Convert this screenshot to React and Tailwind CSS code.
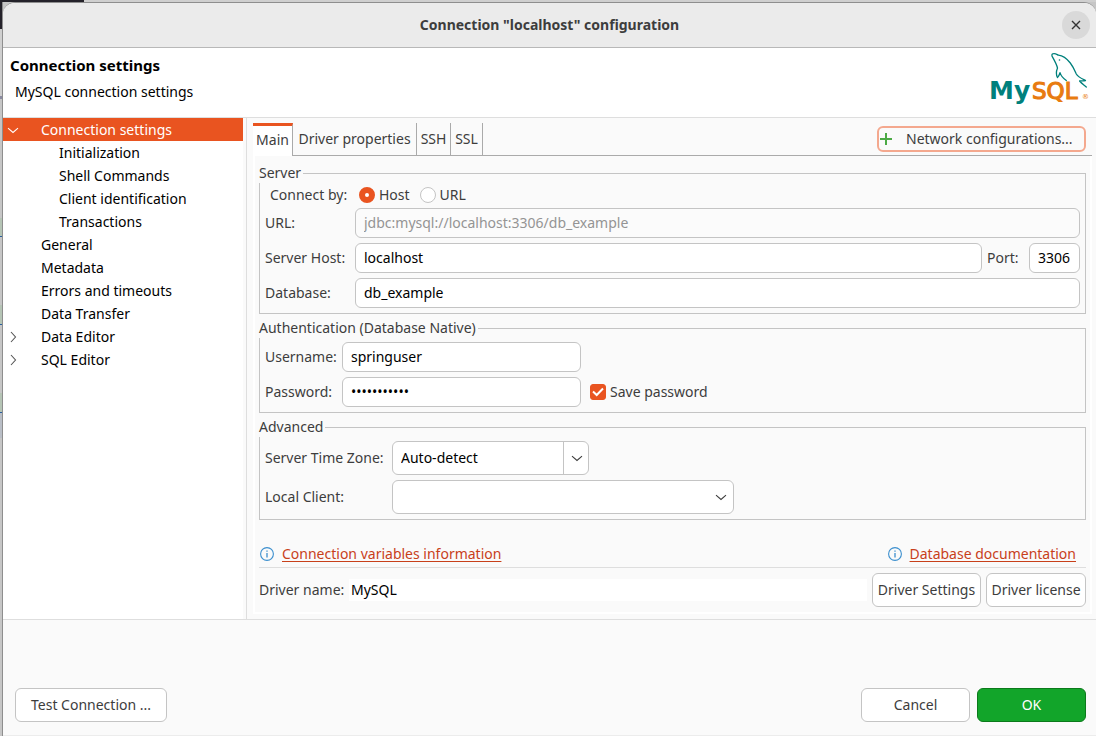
import React from "react";

const TREE = [
  { label: "Connection settings", arrow: "down", selected: true },
  { label: "Initialization", child: true },
  { label: "Shell Commands", child: true },
  { label: "Client identification", child: true },
  { label: "Transactions", child: true },
  { label: "General" },
  { label: "Metadata" },
  { label: "Errors and timeouts" },
  { label: "Data Transfer" },
  { label: "Data Editor", arrow: "right" },
  { label: "SQL Editor", arrow: "right" },
];

const BUTTON =
  "h-[34px] rounded-md border border-[#c4c4c4] bg-white text-[#3d3d3d] whitespace-nowrap";
const FIELD =
  "h-[30px] min-w-0 rounded-md border border-[#c4c4c4] bg-white px-2 pb-0.5 text-black outline-none";

function Chevron({ dir = "down", className = "" }) {
  return (
    <svg viewBox="0 0 12 12" className={"size-3 " + className} fill="none" stroke="currentColor" strokeWidth="1.1" aria-hidden="true">
      <path d={dir === "down" ? "M1 4.2 L6 8.5 L11 4.2" : "M4 1 L8.5 6 L4 11"} />
    </svg>
  );
}

function MySqlLogo() {
  return (
    <svg viewBox="0 0 99 52" className="h-[52px] w-[99px]" role="img" aria-label="MySQL">
      <g fontFamily="'DejaVu Sans', sans-serif">
        <text x="-1" y="47" fontSize="25" fontWeight="700" fill="#00807c">My</text>
        <text x="42" y="47" fontSize="23" fill="#e87b10" stroke="#e87b10" strokeWidth="1.2">SQL</text>
        <text x="92" y="47" fontSize="7" fill="#e87b10">®</text>
      </g>
      <g fill="none" stroke="#00807c" strokeWidth="1.3" strokeLinejoin="round" strokeLinecap="round">
        <path d="M67.5 25.5 C65.5 22 66.5 18.5 67.5 16 C66.5 12 64.5 8.5 62.8 5.5 C61.4 3.6 61.5 1.8 63.5 1.7 C65.5 1.2 67 2.6 68.5 3.2 C74 3.8 77.5 7.5 80.3 11 C83.2 14.7 84.8 18.5 86.3 22 C88 25 91.5 26.5 95.5 28.5 C93 29.2 91.5 28.6 89.6 29 C91.5 31.5 94 33 96.3 35" />
        <path d="M67.5 25.5 C68.8 24.8 69.3 23 70 20.6 C71 24 73.5 26.5 76.3 28.5" />
      </g>
      <circle cx="69.5" cy="8" r="0.8" fill="#00807c" />
    </svg>
  );
}

function InfoLink({ children }) {
  return (
    <div className="flex items-center gap-2">
      <svg viewBox="0 0 14 14" className="size-[14px]" fill="none" stroke="#3c8fce" aria-hidden="true">
        <circle cx="7" cy="7" r="6.4" strokeWidth="1.1" />
        <path d="M7 6 V10.5 M7 3.5 V4.8" strokeWidth="1.3" />
      </svg>
      <a href="#" className="text-[#c8401a] underline underline-offset-2">{children}</a>
    </div>
  );
}

function Group({ title, children }) {
  return (
    <fieldset className="min-w-0 border border-[#c4c4c4] px-[5px] pb-[5px]">
      <legend className="-ml-[6px] h-5 bg-[#fafafa] pr-0.5 leading-5">{title}</legend>
      {children}
    </fieldset>
  );
}

function Backdrop() {
  return (
    <div className="flex w-[3px] shrink-0 flex-col border-r border-[#8e8e8e] bg-[#c6c6c6]" aria-hidden="true">
      <div className="h-[27px] bg-[#24222a]" />
      <div className="h-[67px] bg-[#cfcfcf]" />
      <div className="h-[3px] bg-[#8a8aa0]" />
      <div className="h-[119px]" />
      <div className="h-[19px] border-b border-[#2a5f9e] bg-[#b5c4b5]" />
      <div className="h-[68px]" />
      <div className="h-[20px] border-b border-[#2a5f9e] bg-[#b5c4b5]" />
      <div className="h-[68px]" />
      <div className="h-[20px] border-b border-[#2a5f9e] bg-[#b5c4b5]" />
      <div className="h-[25px] bg-[#b9bec6]" />
    </div>
  );
}

export default function App() {
  return (
    <div className="flex min-h-screen flex-col bg-[#c6c6c6] font-['Noto_Sans',sans-serif] text-[14px] leading-5 text-[#3d3d3d]">
      <div className="flex h-0.5 shrink-0" aria-hidden="true">
        <div className="w-[84px] bg-[#24222a]" />
        <div className="flex-1 bg-[#cfcfcf]" />
      </div>
      <div className="flex flex-1 items-stretch">
        <Backdrop />
        <main className="flex min-w-0 flex-1 flex-col rounded-t-xl border-t border-[#8e8e8e] bg-[#fafafa]">
          <header className="flex h-[45px] shrink-0 items-center rounded-t-xl border-b border-[#b8b8b8] bg-[#ebebeb] pr-[6px] pl-[34px]">
            <h1 className="flex-1 text-center font-bold">Connection "localhost" configuration</h1>
            <button type="button" aria-label="Close" className="grid size-7 place-items-center rounded-full bg-[#d9d9d9] text-[#333]">
              <svg viewBox="0 0 10 10" className="size-[10px]" stroke="currentColor" strokeWidth="1.4" aria-hidden="true">
                <path d="M1 1 L9 9 M9 1 L1 9" />
              </svg>
            </button>
          </header>

          <section className="flex h-[70px] shrink-0 justify-between border-b border-[#dedede] bg-white pr-[7px] pl-[7px] text-black">
            <div className="pt-[7px]">
              <h2 className="text-[15px] leading-5 font-bold">Connection settings</h2>
              <p className="mt-[7px] pl-[5px]">MySQL connection settings</p>
            </div>
            <div className="pt-1">
              <MySqlLogo />
            </div>
          </section>

          <div className="flex border-b border-[#dedede]">
            <nav aria-label="Settings pages" className="flex w-[244px] shrink-0 border-r border-[#dedede] pr-[3px] text-black">
              <ul className="flex-1 bg-white">
                {TREE.map((n) => (
                  <li key={n.label}>
                    <button
                      type="button"
                      className={
                        "flex h-[23px] w-full items-center text-left " +
                        (n.child ? "pl-14 " : "") +
                        (n.selected ? "bg-[#e95420] text-white" : "")
                      }
                    >
                      {!n.child && (
                        <span className="w-[38px] shrink-0 pl-1">
                          {n.arrow && <Chevron dir={n.arrow} className={n.selected ? "" : "text-[#555]"} />}
                        </span>
                      )}
                      {n.label}
                    </button>
                  </li>
                ))}
              </ul>
            </nav>

            <section className="min-w-0 flex-1 pt-[5px] pr-1 pb-[5px] pl-[6px]">
              <div className="flex h-[33px]">
                <div role="tablist" className="flex">
                  <button type="button" role="tab" aria-selected="true" className="w-10 border-t-[3px] border-r border-t-[#e95420] border-r-[#aaa] bg-white pb-0.5">
                    Main
                  </button>
                  <button type="button" role="tab" aria-selected="false" className="w-[124px] border-r border-b border-[#aaa]">Driver properties</button>
                  <button type="button" role="tab" aria-selected="false" className="w-[34px] border-r border-b border-[#aaa]">SSH</button>
                  <button type="button" role="tab" aria-selected="false" className="w-8 border-r border-b border-[#aaa]">SSL</button>
                </div>
                <div className="flex flex-1 items-start justify-end border-b border-[#aaa] pt-[3px] pr-[6px]">
                  <button type="button" className="flex h-[26px] w-[209px] items-center gap-[14px] rounded-md border-2 border-[#f4a88e] pl-px whitespace-nowrap">
                    <svg viewBox="0 0 12 12" className="size-3 shrink-0" stroke="#4caa45" strokeWidth="2" aria-hidden="true">
                      <path d="M6 0 V12 M0 6 H12" />
                    </svg>
                    Network configurations...
                  </button>
                </div>
              </div>

              <div role="tabpanel" className="border-2 border-t-0 border-white px-1 pt-[7px] pb-[5px]">
                <div className="flex flex-col gap-1">
                  <Group title="Server">
                    <div className="flex h-[25px] items-center pb-0.5 pl-[5px]">
                      <span className="w-[89px]">Connect by:</span>
                      <label className="flex items-center gap-1">
                        <input type="radio" name="mode" defaultChecked className="size-4 appearance-none rounded-full border border-[#c4c4c4] bg-white checked:border-[6px] checked:border-[#e95420]" />
                        Host
                      </label>
                      <label className="ml-[10px] flex items-center gap-1">
                        <input type="radio" name="mode" className="size-4 appearance-none rounded-full border border-[#c4c4c4] bg-white checked:border-[6px] checked:border-[#e95420]" />
                        URL
                      </label>
                    </div>
                    <div className="grid grid-cols-[85px_1fr] items-center gap-[5px]">
                      <label htmlFor="url">URL:</label>
                      <input id="url" disabled defaultValue="jdbc:mysql://localhost:3306/db_example" className="h-[30px] min-w-0 rounded-md border border-[#c4c4c4] bg-[#fbfbfb] px-2 pb-0.5 text-[#949494]" />
                      <label htmlFor="host">Server Host:</label>
                      <div className="flex min-w-0 items-center">
                        <input id="host" defaultValue="localhost" className={FIELD + " flex-1"} />
                        <label htmlFor="port" className="w-[47px] shrink-0 pl-[5px]">Port:</label>
                        <input id="port" defaultValue="3306" className={FIELD + " w-[51px]"} />
                      </div>
                      <label htmlFor="database">Database:</label>
                      <input id="database" defaultValue="db_example" className={FIELD} />
                    </div>
                  </Group>

                  <Group title="Authentication (Database Native)">
                    <div className="grid grid-cols-[72px_239px_1fr] items-center gap-[5px] pt-1">
                      <label htmlFor="user">Username:</label>
                      <input id="user" defaultValue="springuser" className={FIELD} />
                      <span />
                      <label htmlFor="password">Password:</label>
                      <input id="password" type="password" defaultValue="springsprin" className={FIELD} />
                      <label className="flex items-center gap-1 pl-1">
                        <span className="grid">
                          <input type="checkbox" defaultChecked className="col-start-1 row-start-1 size-4 appearance-none rounded-[3px] border border-[#c4c4c4] bg-white checked:border-[#e95420] checked:bg-[#e95420]" />
                          <svg viewBox="0 0 16 16" className="pointer-events-none col-start-1 row-start-1 size-4" fill="none" stroke="#fff" strokeWidth="2" aria-hidden="true">
                            <path d="M3 7.5 L6.7 11 L13 4.5" />
                          </svg>
                        </span>
                        Save password
                      </label>
                    </div>
                  </Group>

                  <Group title="Advanced">
                    <div className="grid grid-cols-[122px_1fr] items-center gap-[5px] pt-1">
                      <label htmlFor="zone">Server Time Zone:</label>
                      <div className="grid w-[197px]">
                        <select id="zone" className="col-start-1 row-start-1 h-[34px] appearance-none rounded-md border border-[#c4c4c4] bg-white pl-2 text-black">
                          <option>Auto-detect</option>
                        </select>
                        <span className="pointer-events-none col-start-1 row-start-1 my-px grid w-[26px] place-items-center justify-self-end border-l border-[#c4c4c4]">
                          <Chevron />
                        </span>
                      </div>
                      <label htmlFor="client">Local Client:</label>
                      <div className="grid w-[342px]">
                        <select id="client" className="col-start-1 row-start-1 h-[34px] appearance-none rounded-md border border-[#c4c4c4] bg-white pl-2 text-black">
                          <option></option>
                        </select>
                        <span className="pointer-events-none col-start-1 row-start-1 my-px grid w-[26px] place-items-center justify-self-end">
                          <Chevron />
                        </span>
                      </div>
                    </div>
                  </Group>
                </div>

                <div className="mt-6 flex h-6 items-start justify-between border-b border-[#dedede] pr-[10px] pl-px">
                  <InfoLink>Connection variables information</InfoLink>
                  <InfoLink>Database documentation</InfoLink>
                </div>

                <div className="flex items-center gap-[5px] pt-[5px]">
                  <label htmlFor="driver" className="w-[85px] shrink-0 whitespace-nowrap">Driver name:</label>
                  <input id="driver" readOnly defaultValue="MySQL" className="h-[22px] min-w-0 flex-1 bg-white px-0.5 pb-0.5 text-black outline-none" />
                  <button type="button" className={BUTTON + " w-[109px]"}>Driver Settings</button>
                  <button type="button" className={BUTTON + " w-[100px]"}>Driver license</button>
                </div>
              </div>
            </section>
          </div>

          <footer className="flex flex-1 items-end border-b border-[#ececec] pr-[10px] pb-[13px] pl-3">
            <button type="button" className={BUTTON + " w-[152px]"}>Test Connection ...</button>
            <div className="ml-auto flex gap-[7px]">
              <button type="button" className={BUTTON + " w-[109px]"}>Cancel</button>
              <button type="button" className="h-[34px] w-[109px] rounded-md border border-[#0b7a1b] bg-[#12a52a] text-white">OK</button>
            </div>
          </footer>
        </main>
      </div>
    </div>
  );
}
